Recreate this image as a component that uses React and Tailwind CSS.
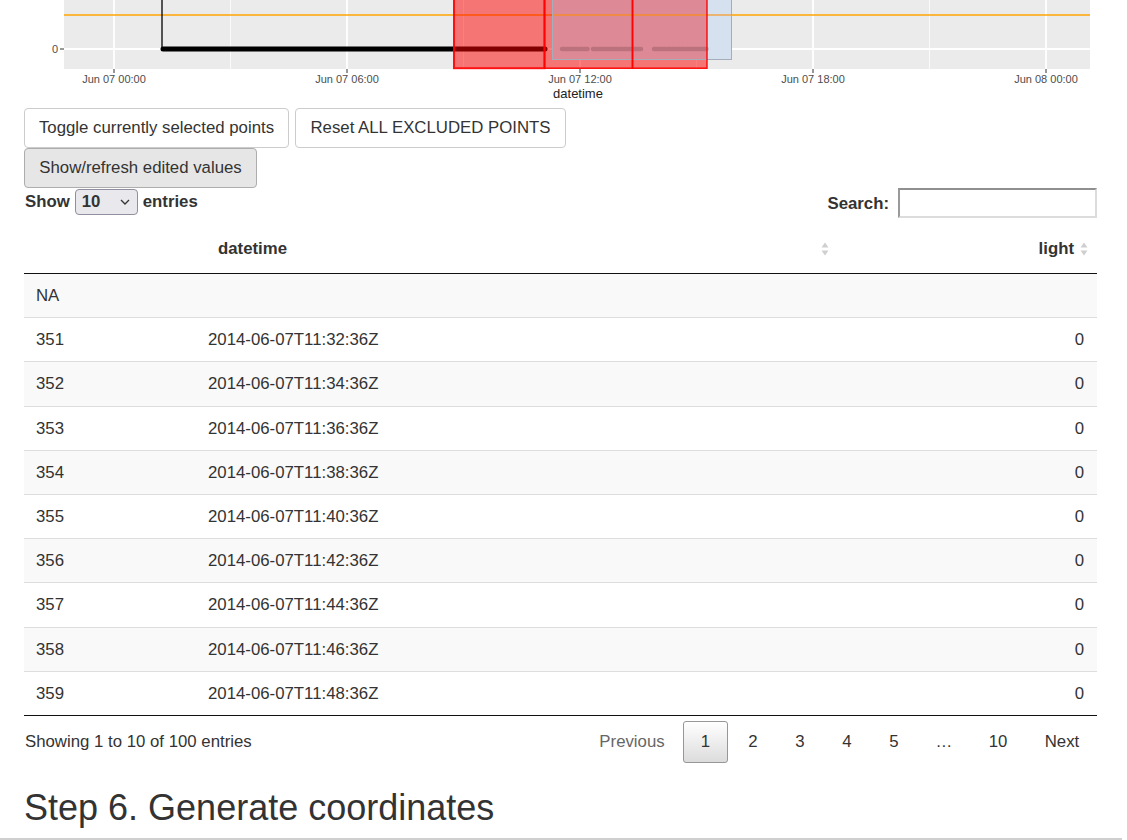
import React from "react";

const rows = [
  ["NA", "", ""],
  ["351", "2014-06-07T11:32:36Z", "0"],
  ["352", "2014-06-07T11:34:36Z", "0"],
  ["353", "2014-06-07T11:36:36Z", "0"],
  ["354", "2014-06-07T11:38:36Z", "0"],
  ["355", "2014-06-07T11:40:36Z", "0"],
  ["356", "2014-06-07T11:42:36Z", "0"],
  ["357", "2014-06-07T11:44:36Z", "0"],
  ["358", "2014-06-07T11:46:36Z", "0"],
  ["359", "2014-06-07T11:48:36Z", "0"],
];

const majors = [
  [114, "Jun 07 00:00"],
  [347, "Jun 07 06:00"],
  [580, "Jun 07 12:00"],
  [813, "Jun 07 18:00"],
  [1046, "Jun 08 00:00"],
];
const minors = [230.5, 463.5, 696.5, 929.5];
const axisFont = "Liberation Sans, Arial, sans-serif";

function Chart() {
  return (
    <svg width="1127" height="104" viewBox="0 0 1127 104" className="block shrink-0">
      <rect x="64" y="0" width="1026" height="69" fill="#ebebeb" />
      {minors.map((x) => (
        <line key={x} x1={x} y1="0" x2={x} y2="69" stroke="#fafafa" strokeWidth="1" />
      ))}
      {majors.map(([x]) => (
        <line key={x} x1={x} y1="0" x2={x} y2="69" stroke="#ffffff" strokeWidth="1.8" />
      ))}
      <line x1="64" y1="49" x2="1090" y2="49" stroke="#ffffff" strokeWidth="1.8" />
      <line x1="64" y1="15" x2="1090" y2="15" stroke="#ffa500" strokeWidth="1.5" />
      {/* data */}
      <line x1="162" y1="0" x2="162" y2="49" stroke="#000" strokeWidth="1.3" />
      <line x1="163" y1="49" x2="545" y2="49" stroke="#000" strokeWidth="5" strokeLinecap="round" />
      {/* excluded selection */}
      <rect x="453" y="0" width="254" height="69" fill="rgba(255,0,0,0.5)" />
      <rect x="552" y="0" width="155" height="59" fill="#de8a96" />
      <rect x="707" y="0" width="24" height="59" fill="#d5e1ef" />
      <line x1="552" y1="15" x2="731" y2="15" stroke="#ff8c00" strokeOpacity="0.7" strokeWidth="1.5" />
      <g stroke="rgba(110,60,70,0.3)" strokeWidth="4.5" strokeLinecap="round" strokeDasharray="3 1.5">
        <line x1="562" y1="49" x2="588" y2="49" />
        <line x1="593" y1="49" x2="642" y2="49" />
        <line x1="654" y1="49" x2="708" y2="49" />
      </g>
      <rect x="552.5" y="-1" width="179" height="60.5" fill="none" stroke="#a6adba" strokeWidth="1" />
      <g stroke="rgba(255,0,0,0.85)" strokeWidth="1.6" fill="none">
        <rect x="454" y="-1" width="90.5" height="69.2" strokeWidth="2" />
        <rect x="544.5" y="-1" width="88" height="69.2" />
        <rect x="632.5" y="-1" width="74.5" height="69.2" />
      </g>
      {/* axes */}
      <line x1="60" y1="49" x2="64" y2="49" stroke="#333" strokeWidth="1" />
      <text x="58" y="52.5" textAnchor="end" fontSize="11" fill="#4d4d4d" fontFamily={axisFont}>
        0
      </text>
      {majors.map(([x, label]) => (
        <g key={label}>
          <line x1={x} y1="69" x2={x} y2="73" stroke="#333" strokeWidth="1" />
          <text x={x} y="83" textAnchor="middle" fontSize="11" fill="#4d4d4d" fontFamily={axisFont}>
            {label}
          </text>
        </g>
      ))}
      <text x="578" y="97.5" textAnchor="middle" fontSize="13" fill="#222" fontFamily={axisFont}>
        datetime
      </text>
    </svg>
  );
}

function SortIcon() {
  return (
    <svg width="8" height="14" viewBox="0 0 8 14" className="shrink-0">
      <path d="M4 0.5 L7.5 5.5 L0.5 5.5 Z" fill="#cfcfcf" />
      <path d="M0.5 8.5 L7.5 8.5 L4 13.5 Z" fill="#cfcfcf" />
    </svg>
  );
}

function PageButton({ children, active, className = "" }) {
  return (
    <span
      className={
        "flex h-[42px] items-center justify-center rounded-[3px] border " +
        (active
          ? "border-[#979797] bg-gradient-to-b from-white to-[#dcdcdc] text-[#333] "
          : "border-transparent text-[#333] ") +
        className
      }
    >
      {children}
    </span>
  );
}

export default function App() {
  return (
    <div className="flex h-[840px] w-[1127px] flex-col overflow-hidden bg-white font-['Liberation_Sans',Arial,sans-serif] text-[16.8px] text-[#333]">
      <Chart />

      <div className="mt-[4px] flex gap-[6px] pl-[24px]">
        <button className="h-[40px] w-[265px] rounded-[4px] border border-[#cccccc] bg-white text-[16.8px] text-[#333]">
          Toggle currently selected points
        </button>
        <button className="h-[40px] w-[271px] rounded-[4px] border border-[#cccccc] bg-white text-[16.8px] text-[#333]">
          Reset ALL EXCLUDED POINTS
        </button>
      </div>
      <div className="pl-[24px]">
        <button className="h-[40px] w-[233px] rounded-[4px] border border-[#adadad] bg-[#e6e6e6] text-[16.8px] text-[#333]">
          Show/refresh edited values
        </button>
      </div>

      <div className="flex items-start justify-between pl-[25px] pr-[30px]">
        <div className="mt-[1px] flex items-center gap-[5px] font-bold">
          <span>Show</span>
          <div className="flex h-[26px] w-[63px] items-center justify-between rounded-[4px] border border-[#8f8f9d] bg-[#e9e9ed] pl-[6px] pr-[7px]">
            <span>10</span>
            <svg width="10" height="6" viewBox="0 0 10 6">
              <path d="M1 1 L5 5 L9 1" fill="none" stroke="#333" strokeWidth="1.3" />
            </svg>
          </div>
          <span>entries</span>
        </div>
        <div className="flex items-center gap-[9px] font-bold">
          <span className="mt-[2px]">Search:</span>
          <div className="h-[30px] w-[199px] border-2 border-t-[#8f8f8f] border-l-[#9a9a9a] border-r-[#dcdcdc] border-b-[#dcdcdc] bg-white" />
        </div>
      </div>

      <div className="pl-[24px] pr-[30px]">
        <div className="grid h-[56px] grid-cols-[172px_642px_259px] border-b border-[#111] font-bold">
          <div />
          <div className="flex items-end justify-between pb-[14px] pl-[22px] pr-[9px] leading-[20px]">
            <span>datetime</span>
            <span className="mb-[3px]">
              <SortIcon />
            </span>
          </div>
          <div className="flex items-end justify-end gap-[6px] pb-[14px] pr-[9px] leading-[20px]">
            <span>light</span>
            <span className="mb-[3px]">
              <SortIcon />
            </span>
          </div>
        </div>
        {rows.map((r, i) => (
          <div
            key={r[0]}
            className={
              "grid h-[44.2px] grid-cols-[172px_642px_259px] items-center " +
              (i % 2 === 0 ? "bg-[#f9f9f9] " : "bg-white ") +
              (i < rows.length - 1 ? "border-b border-[#dddddd]" : "border-b border-[#111]")
            }
          >
            <div className="pl-[12px]">{r[0]}</div>
            <div className="pl-[12px]">{r[1]}</div>
            <div className="pr-[13px] text-right">{r[2]}</div>
          </div>
        ))}

        <div className="mt-[5px] flex items-center justify-between">
          <span className="pl-[1px]">Showing 1 to 10 of 100 entries</span>
          <div className="flex items-center gap-[3px]">
            <PageButton className="w-[96px] text-[#666]">Previous</PageButton>
            <PageButton active className="w-[45px]">1</PageButton>
            <PageButton className="w-[44px]">2</PageButton>
            <PageButton className="w-[44px]">3</PageButton>
            <PageButton className="w-[44px]">4</PageButton>
            <PageButton className="w-[44px]">5</PageButton>
            <PageButton className="w-[50px]">…</PageButton>
            <PageButton className="w-[52px]">10</PageButton>
            <PageButton className="w-[70px]">Next</PageButton>
          </div>
        </div>
      </div>

      <h3 className="mt-[25px] pl-[24px] text-[36px] font-normal leading-[40px] text-[#333]">
        Step 6. Generate coordinates
      </h3>

      <div className="mt-auto h-[2px] w-[1122px] bg-[#cfcfcf]" />
    </div>
  );
}
